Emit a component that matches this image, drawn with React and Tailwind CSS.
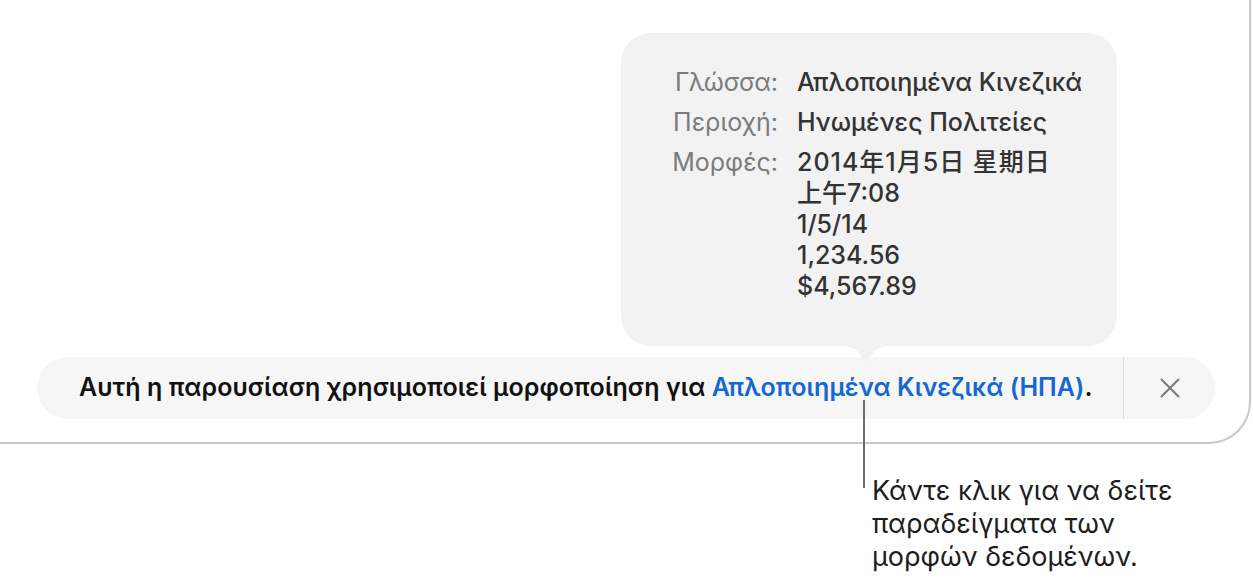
import React from 'react';

const font = { fontFamily: 'Inter, "Noto Sans CJK SC", sans-serif' };

const FormatPopover = () => {
    // Label / value rows shown in the preview bubble
    const rows = [
        { label: 'Γλώσσα:', values: ['Απλοποιημένα Κινεζικά'] },
        { label: 'Περιοχή:', values: ['Ηνωμένες Πολιτείες'] },
        { label: 'Μορφές:', values: ['2014年1月5日 星期日', '上午7:08', '1/5/14', '1,234.56', '$4,567.89'] },
    ];

    return (
        <div className="relative ml-[621px] w-[496px] rounded-[30px] bg-[#f2f2f2] pt-[34px] pb-[44px] pl-[42px]">
            <div className="flex flex-col gap-[9px]">
                {rows.map(row => (
                    <div key={row.label} className="flex gap-[19px] text-[25px] leading-[31px]">
                        <div className="w-[115px] text-right text-[#7b7b7b]">{row.label}</div>
                        <div className="flex flex-col font-medium text-[#333333]">
                            {row.values.map((v, i) => (
                                <div key={v} className={i === 0 && row.values.length > 1 ? 'tracking-[1px]' : ''}>{v}</div>
                            ))}
                        </div>
                    </div>
                ))}
            </div>
            <svg className="absolute left-[245px] top-full -translate-x-1/2" width="54" height="21" viewBox="0 0 54 21">
                <path d="M0 0 C 14 0, 18 3, 24 13 Q 27 18, 30 13 C 36 3, 40 0, 54 0 Z" fill="#f2f2f2" />
            </svg>
        </div>
    );
};

const App = () => {
    return (
        <div className="relative h-[580px] w-[1253px] overflow-hidden bg-white" style={font}>
            <div className="h-[444px] w-[1251px] rounded-br-[42px] border-r-2 border-b-2 border-[#c8c8c8] pt-[33px]">
                <FormatPopover />

                <div className="mt-[11px] ml-[37px] flex h-[62px] w-[1178px] items-center rounded-full bg-[#f6f6f6]">
                    <div className="flex-1 pl-[42px] text-[25px] font-semibold tracking-[0.07px] whitespace-nowrap text-[#111111]">
                        Αυτή η παρουσίαση χρησιμοποιεί μορφοποίηση για{' '}
                        <span className="text-[#1467d4]">Απλοποιημένα Κινεζικά (ΗΠΑ)</span>.
                    </div>
                    <div className="h-full w-px bg-[#dcdcdc]" />
                    <div className="flex h-full w-[91px] items-center justify-center">
                        <svg width="20" height="20" viewBox="0 0 20 20" fill="none" stroke="#7a7a7a" strokeWidth="2" strokeLinecap="round">
                            <path d="M1.5 1.5 L18.5 18.5 M18.5 1.5 L1.5 18.5" />
                        </svg>
                    </div>
                </div>
            </div>

            {/* callout line pointing at the link */}
            <div className="absolute left-[863px] top-[400px] h-[88px] w-[2px] bg-[#6e6e6e]" />

            <div className="mt-[30px] ml-[872px] text-[27px] leading-[33px] text-[#1d1d1f]">
                <div>Κάντε κλικ για να δείτε</div>
                <div>παραδείγματα των</div>
                <div>μορφών δεδομένων.</div>
            </div>
        </div>
    );
};

export default App;
